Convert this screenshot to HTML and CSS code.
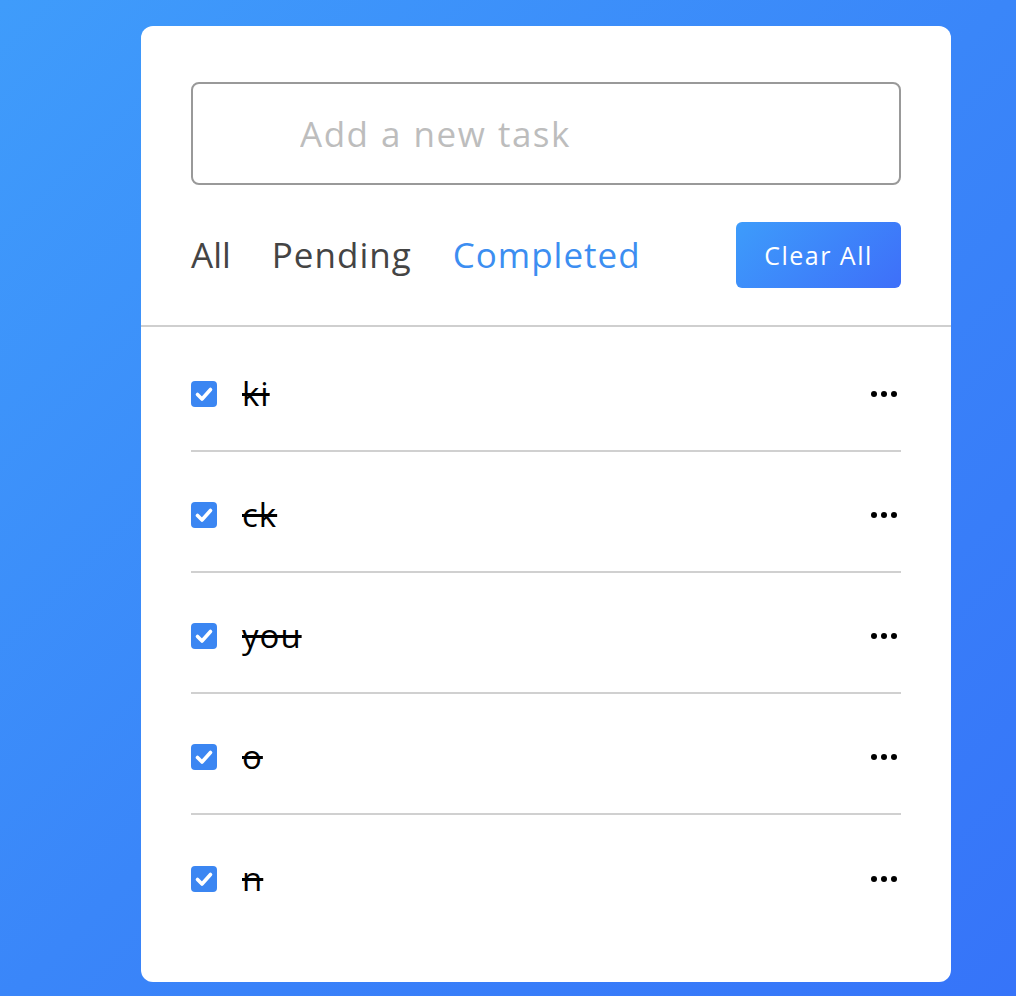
FILE: index.html
```html
<!DOCTYPE html>
<html>
<head>
<meta charset="utf-8">
<link rel="stylesheet" href="styles.css">
</head>
<body>
<div class="card">
  <div class="top">
    <input class="task-input" type="text" placeholder="Add a new task">
    <div class="controls">
      <div class="filters">
        <span class="filter">All</span>
        <span class="filter">Pending</span>
        <span class="filter active">Completed</span>
      </div>
      <button class="clear-btn">Clear All</button>
    </div>
  </div>
  <ul class="task-list">
    <li class="task"><label class="task-label"><span class="check"><svg viewBox="0 0 26 26" width="26" height="26"><path d="M6.5 13.5 L11 18 L19.5 8.5" fill="none" stroke="#fff" stroke-width="3.6" stroke-linecap="round" stroke-linejoin="round"/></svg></span><span class="name">ki</span></label><span class="dots"><i></i><i></i><i></i></span></li>
    <li class="task"><label class="task-label"><span class="check"><svg viewBox="0 0 26 26" width="26" height="26"><path d="M6.5 13.5 L11 18 L19.5 8.5" fill="none" stroke="#fff" stroke-width="3.6" stroke-linecap="round" stroke-linejoin="round"/></svg></span><span class="name">ck</span></label><span class="dots"><i></i><i></i><i></i></span></li>
    <li class="task"><label class="task-label"><span class="check"><svg viewBox="0 0 26 26" width="26" height="26"><path d="M6.5 13.5 L11 18 L19.5 8.5" fill="none" stroke="#fff" stroke-width="3.6" stroke-linecap="round" stroke-linejoin="round"/></svg></span><span class="name">you</span></label><span class="dots"><i></i><i></i><i></i></span></li>
    <li class="task"><label class="task-label"><span class="check"><svg viewBox="0 0 26 26" width="26" height="26"><path d="M6.5 13.5 L11 18 L19.5 8.5" fill="none" stroke="#fff" stroke-width="3.6" stroke-linecap="round" stroke-linejoin="round"/></svg></span><span class="name">o</span></label><span class="dots"><i></i><i></i><i></i></span></li>
    <li class="task"><label class="task-label"><span class="check"><svg viewBox="0 0 26 26" width="26" height="26"><path d="M6.5 13.5 L11 18 L19.5 8.5" fill="none" stroke="#fff" stroke-width="3.6" stroke-linecap="round" stroke-linejoin="round"/></svg></span><span class="name">n</span></label><span class="dots"><i></i><i></i><i></i></span></li>
  </ul>
</div>
</body>
</html>
```
FILE: styles.css
```css
* { box-sizing: border-box; }
html, body { margin: 0; padding: 0; }
body {
  width: 1016px;
  height: 996px;
  overflow: hidden;
  background: linear-gradient(135deg, #3f9cfb 0%, #3a86f9 50%, #3674f9 100%);
  font-family: "Open Sans", "DejaVu Sans", sans-serif;
  padding-top: 26px;
  padding-left: 141px;
}
.card {
  width: 810px;
  height: 956px;
  background: #fff;
  border-radius: 12px;
}
.top {
  padding: 56px 50px 0 50px;
  border-bottom: 2px solid #cfcfcf;
}
.task-input {
  display: block;
  width: 710px;
  height: 103px;
  border: 2px solid #999;
  border-radius: 8px;
  padding: 0 0 0 107px;
  font-family: inherit;
  font-size: 35px;
  letter-spacing: 1.5px;
  word-spacing: 1px;
  color: #333;
  outline: none;
}
.task-input::placeholder { color: #bdbdbd; }
.controls {
  display: flex;
  align-items: center;
  justify-content: space-between;
  margin-top: 37px;
  padding-bottom: 37px;
}
.filters { display: flex; gap: 41px; }
.filter {
  font-size: 35px;
  letter-spacing: 1px;
  color: #444;
  line-height: 40px;
}
.filter:first-child { letter-spacing: 0; }
.filter.active { color: #3c8ef1; }
.clear-btn {
  width: 165px;
  height: 66px;
  border: none;
  border-radius: 6px;
  background: linear-gradient(135deg, #3d9cfb 0%, #3e6ff9 100%);
  color: #fff;
  font-family: inherit;
  font-size: 25px;
  font-weight: 500;
  letter-spacing: 1.5px;
  padding: 0;
}
.task-list {
  list-style: none;
  margin: 0;
  padding: 2px 50px 0 50px;
}
.task {
  display: flex;
  align-items: center;
  justify-content: space-between;
  height: 121px;
  padding-top: 7px;
  border-bottom: 2px solid #d0d0d0;
}
.task:first-child { height: 123px; padding-top: 9px; }
.task:last-child { border-bottom: none; }
.task-label { display: flex; align-items: center; gap: 25px; }
.check {
  width: 26px;
  height: 26px;
  border-radius: 4px;
  background: #3b86f2;
  display: flex;
}
.name {
  font-size: 33px;
  letter-spacing: 1px;
  font-weight: 500;
  color: #000;
  text-decoration: line-through;
  line-height: 36px;
}
.dots { display: flex; gap: 4px; margin-right: 4px; }
.dots i { width: 6px; height: 6px; border-radius: 50%; background: #000; display: block; }
```
